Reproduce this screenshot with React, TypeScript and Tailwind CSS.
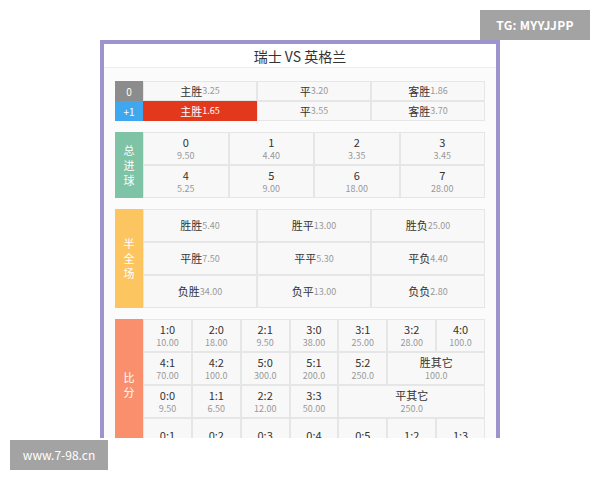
import React from "react";

const F = { fontFamily: '"Noto Sans CJK SC","Noto Sans",sans-serif' };

function Cell({ a, b, cls = "" }: { a: string; b: string; cls?: string }) {
  return (
    <div className={"flex flex-col items-center justify-center bg-[#f8f8f8] border border-[#e6e6e6] leading-[14px] " + cls}>
      <div className="text-[11px] text-[#333]">{a}</div>
      <div className="text-[9px] text-[#999]">{b}</div>
    </div>
  );
}
function Inl({ a, b, cls = "" }: { a: string; b: string; cls?: string }) {
  return (
    <div className={"flex items-center justify-center bg-[#f8f8f8] border border-[#e6e6e6] text-[11px] " + cls}>
      <span className="text-[#333]">{a}</span><span className="text-[#999] text-[9px]">{b}</span>
    </div>
  );
}

export default function App() {
  const scores: [string, string, number?][] = [
    ["1:0","10.00"],["2:0","18.00"],["2:1","9.50"],["3:0","38.00"],["3:1","25.00"],["3:2","28.00"],["4:0","100.0"],
    ["4:1","70.00"],["4:2","100.0"],["5:0","300.0"],["5:1","200.0"],["5:2","250.0"],["胜其它","100.0",2],
    ["0:0","9.50"],["1:1","6.50"],["2:2","12.00"],["3:3","50.00"],["平其它","250.0",3],
    ["0:1","-"],["0:2","-"],["0:3","-"],["0:4","-"],["0:5","-"],["1:2","-"],["1:3","-"],
  ];
  return (
    <div style={F} className="relative w-[600px] h-[480px] bg-white overflow-hidden">
      <div className="absolute left-[480px] top-[10px] w-[110px] h-[30px] bg-[#a3a3a3] text-white text-[12px] font-semibold flex items-center justify-center tracking-wide">TG: MYYJJPP</div>
      <div className="absolute left-[100px] top-[40px] w-[400px] h-[398px] bg-[#9e93cf] p-[4px] pb-0">
        <div className="bg-white h-full overflow-hidden flex flex-col">
          <div className="h-[30px] mt-[2px] flex items-center justify-center text-[14px] text-[#333] border-b border-[#eee]">瑞士 VS 英格兰</div>
          <div className="flex-1 bg-[#fbfbfb] px-[11px] pt-[13px] flex flex-col gap-[11px]">
            <div className="flex h-[40px]">
              <div className="w-[28px] flex flex-col text-white text-[10px]">
                <div className="h-[20px] bg-[#8c8c8c] flex items-center justify-center">0</div>
                <div className="h-[20px] bg-[#3fa7ee] flex items-center justify-center">+1</div>
              </div>
              <div className="flex-1 grid grid-cols-3 grid-rows-2">
                <Inl a="主胜" b="3.25" />
                <Inl a="平" b="3.20" />
                <Inl a="客胜" b="1.86" />
                <div className="flex items-center justify-center bg-[#e2391d] text-white text-[11px]">主胜<span className="text-[9px]">1.65</span></div>
                <Inl a="平" b="3.55" />
                <Inl a="客胜" b="3.70" />
              </div>
            </div>
            <div className="flex h-[66px]">
              <div className="w-[28px] bg-[#7ec3a5] text-white text-[11px] flex flex-col items-center justify-center leading-[15px]"><span>总</span><span>进</span><span>球</span></div>
              <div className="flex-1 grid grid-cols-4 grid-rows-2">
                {[["0","9.50"],["1","4.40"],["2","3.35"],["3","3.45"],["4","5.25"],["5","9.00"],["6","18.00"],["7","28.00"]].map(([a,b])=>(
                  <Cell key={a} a={a} b={b} />
                ))}
              </div>
            </div>
            <div className="flex h-[99px]">
              <div className="w-[28px] bg-[#fcc55f] text-white text-[11px] flex flex-col items-center justify-center leading-[15px]"><span>半</span><span>全</span><span>场</span></div>
              <div className="flex-1 grid grid-cols-3 grid-rows-3">
                {[["胜胜","5.40"],["胜平","13.00"],["胜负","25.00"],["平胜","7.50"],["平平","5.30"],["平负","4.40"],["负胜","34.00"],["负平","13.00"],["负负","2.80"]].map(([a,b])=>(
                  <Inl key={a} a={a} b={b} />
                ))}
              </div>
            </div>
            <div className="flex h-[132px]">
              <div className="w-[28px] bg-[#fa8f6e] text-white text-[11px] flex flex-col items-center justify-center leading-[15px]"><span>比</span><span>分</span></div>
              <div className="flex-1 grid grid-cols-7 auto-rows-[33px]">
                {scores.map(([a,b,s])=>(
                  <Cell key={a} a={a} b={b === "-" ? "" : b} cls={s===2?"col-span-2":s===3?"col-span-3":""} />
                ))}
              </div>
            </div>
          </div>
        </div>
      </div>
      <div className="absolute left-[10px] top-[440px] w-[98px] h-[30px] bg-[#a3a3a3] text-white text-[12px] flex items-center justify-center">www.7-98.cn</div>
    </div>
  );
}
